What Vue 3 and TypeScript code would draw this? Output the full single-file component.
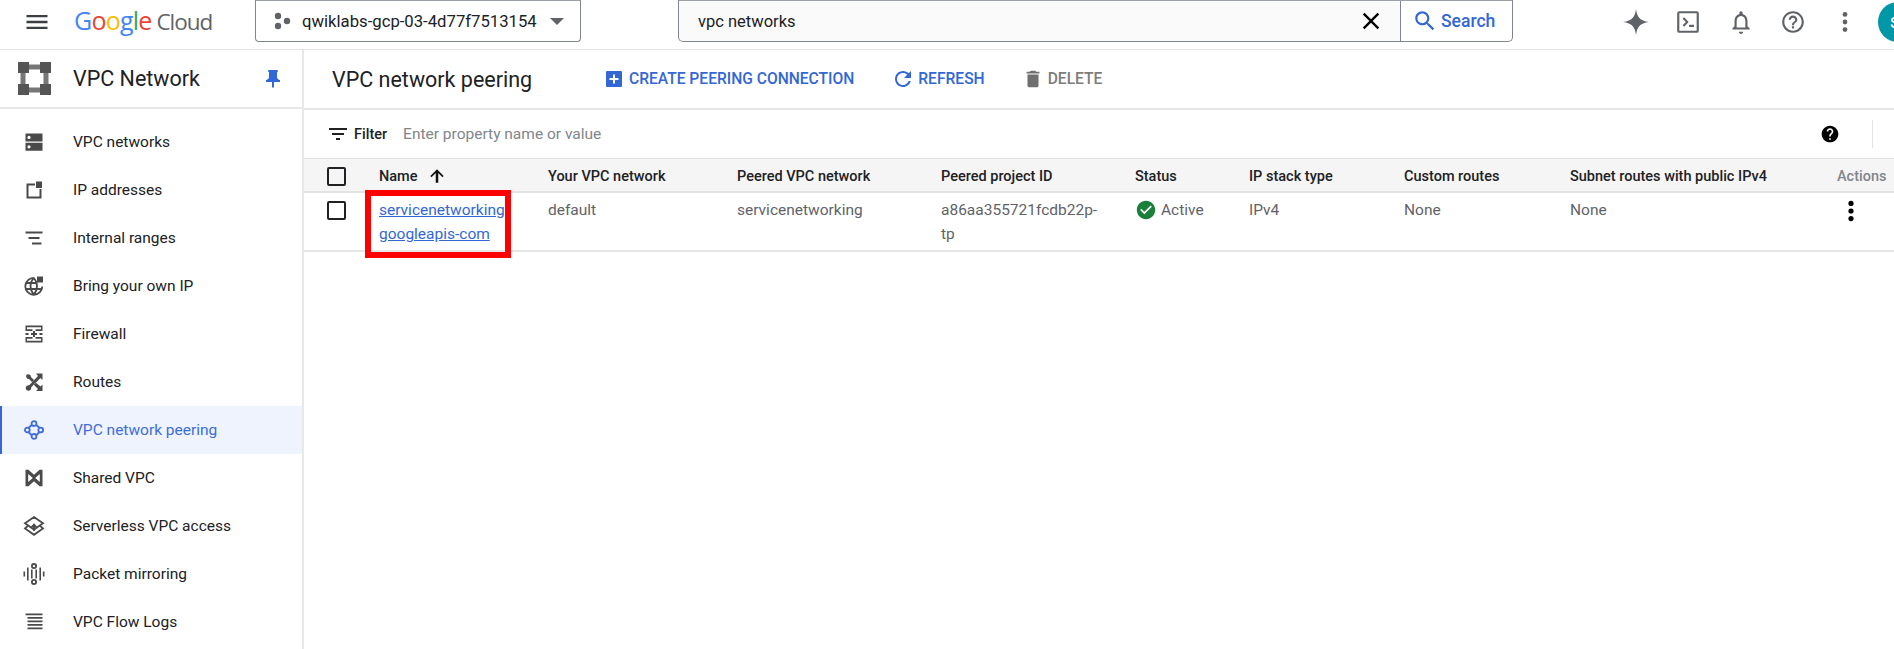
<script setup lang="ts">
interface NavItem { label: string; fill?: string; stroke?: string; active?: boolean }

const nav: NavItem[] = [
  { label: 'VPC networks', fill: 'M0.500 0.500h17v8h-17zM4 2.800a1.600 1.600 0 1 0 0 3.200a1.600 1.600 0 0 0 0-3.200zM0.500 9.800h17v8h-17zM4 12.200a1.600 1.600 0 1 0 0 3.200a1.600 1.600 0 0 0 0-3.200z' },
  { label: 'IP addresses', fill: 'M11 0.500h6v6.500h-6zM1.500 2.500h8.500v2H3.500v11h11V8h2v9.500h-15z' },
  { label: 'Internal ranges', fill: 'M0.500 2.500h17v2h-17zM3.500 8h11v2h-11zM7 13.500h9.500v2H7z' },
  { label: 'Bring your own IP', fill: 'M12 -0.500h6v6h-6z', stroke: 'M17.300 9.500A8.500 8.500 0 1 1 8.800 0.800M0.800 6h10M0.800 12h16M8.800 0.800C4.500 6 4.500 12 8.800 17.700M8.800 0.800C13 6 13 12 8.800 17.700' },
  { label: 'Firewall', fill: 'M0.500 0.500h17v1.800h-17zM0.500 4.300h7v1.800h-7zM10.500 4.300h7v1.800h-7zM0.500 8.100h3v1.800h-3zM6 8.100h6v1.800H6zM14.500 8.100h3v1.800h-3zM0.500 11.900h7v1.800h-7zM10.500 11.900h7v1.800h-7zM0.500 15.700h17v1.800h-17zM0.500 2.300h1.500v2H0.500zM16 2.300h1.500v2H16zM8 6.100h2v2H8zM8 9.900h2v2H8zM0.500 13.700h1.500v2H0.500zM16 13.700h1.500v2H16z' },
  { label: 'Routes', fill: 'M11 0.500h6.500V7l-2-2-9.300 9.300a2.800 2.800 0 1 1-2-2L13 3zM1.500 1.800a2.800 2.800 0 0 1 4.500 2.200L9 7 7 9 4 6A2.800 2.800 0 0 1 1.500 1.800zM10.500 9.500l5 4 2-2v6.500H11l2-2-4.500-4.500z' },
  { label: 'VPC network peering', active: true, stroke: 'M7 3.500 3.500 7M11 3.500 14.500 7M3.500 11 7 14.500M14.500 11 11 14.500M9 0.200a2.400 2.400 0 1 0 0 4.800a2.400 2.400 0 0 0 0-4.800zM2.300 6.600a2.400 2.400 0 1 0 0 4.800a2.400 2.400 0 0 0 0-4.800zM15.700 6.600a2.400 2.400 0 1 0 0 4.800a2.400 2.400 0 0 0 0-4.800zM9 13a2.400 2.400 0 1 0 0 4.800a2.400 2.400 0 0 0 0-4.800z' },
  { label: 'Shared VPC', fill: 'M0.500 0.800h2.900L9 5.700l5.600-4.900h2.900v16.400h-2.900L9 12.300l-5.600 4.900H0.500zM3.200 5v8L7.800 9zM14.800 5 10.200 9l4.600 4z' },
  { label: 'Serverless VPC access', stroke: 'M9 0 18 6.300 9 12.600 0 6.300zM2.800 8.800 0 11.500 9 17.800 18 11.500 15.200 8.800M9 7.500v6.500M6.500 10.300 9 7.500l2.500 2.800' },
  { label: 'Packet mirroring', fill: 'M-1.500 6.500h1.600v5h-1.600zM2 2.500h1.600v13H2zM14.400 2.500H16v13h-1.600zM17.900 6.500h1.600v5h-1.600zM6 4.500h1.600v9H6zM10.400 4.500H12v9h-1.600z', stroke: 'M9 -1a2.100 2.100 0 1 0 0 4.200a2.100 2.100 0 0 0 0-4.200zM9 14.800a2.100 2.100 0 1 0 0 4.200a2.100 2.100 0 0 0 0-4.200z' },
  { label: 'VPC Flow Logs', fill: 'M0.500 0.500h17v1.800h-17zM2.500 4h15v1.800h-15zM2.500 7.500h15v1.800h-15zM2.500 11h15v1.800h-15zM2.500 14.500h15v1.800h-15z' },
]

const columns = [
  'Your VPC network',
  'Peered VPC network',
  'Peered project ID',
  'Status',
  'IP stack type',
  'Custom routes',
  'Subnet routes with public IPv4',
]

const logoLetters = [
  { c: 'G', color: '#4285f4' },
  { c: 'o', color: '#ea4335' },
  { c: 'o', color: '#fbbc04' },
  { c: 'g', color: '#4285f4' },
  { c: 'l', color: '#34a853' },
  { c: 'e', color: '#ea4335' },
]
</script>

<template>
  <div class="page">
    <header class="topbar">
      <svg class="menu" viewBox="0 0 24 24"><path d="M3 18h18v-2H3v2zm0-5h18v-2H3v2zm0-7v2h18V6H3z" /></svg>
      <div class="logo">
        <span v-for="(l, i) in logoLetters" :key="i" :style="{ color: l.color }">{{ l.c }}</span>
        <span class="logo-cloud">Cloud</span>
      </div>
      <div class="project">
        <svg class="project-icon" viewBox="0 0 18 18"><circle cx="5" cy="4" r="3.200" /><circle cx="5" cy="14" r="3.200" /><circle cx="14" cy="9" r="3.200" /></svg>
        <span class="project-name">qwiklabs-gcp-03-4d77f7513154</span>
        <svg class="caret" viewBox="0 0 14 7"><path d="M0 0h14L7 7z" /></svg>
      </div>
      <div class="search">
        <span class="search-query">vpc networks</span>
        <svg class="search-clear" viewBox="0 0 24 24"><path d="M19 6.410L17.590 5 12 10.590 6.410 5 5 6.410 10.590 12 5 17.590 6.410 19 12 13.410 17.590 19 19 17.590 13.410 12z" /></svg>
        <div class="search-btn">
          <svg viewBox="0 0 24 24"><path d="M15.500 14h-.79l-.28-.27C15.410 12.590 16 11.110 16 9.500 16 5.910 13.090 3 9.500 3S3 5.910 3 9.500 5.910 16 9.500 16c1.610 0 3.090-.59 4.230-1.570l.27.28v.79l5 4.990L20.490 19l-4.990-5zm-6 0C7.010 14 5 11.990 5 9.500S7.010 5 9.500 5 14 7.010 14 9.500 11.990 14 9.500 14z" /></svg>
          <span>Search</span>
        </div>
      </div>
      <div class="tools">
        <svg viewBox="0 0 24 24"><path d="M12 0c.9 7.500 3.600 10.800 12 12-8.400 1.200-11.100 4.500-12 12-.9-7.500-3.600-10.800-12-12C8.400 10.800 11.100 7.500 12 0z" /></svg>
        <svg viewBox="0 0 24 24"><path d="M4 2h16a2 2 0 0 1 2 2v16a2 2 0 0 1-2 2H4a2 2 0 0 1-2-2V4a2 2 0 0 1 2-2zm0 2v16h16V4zm3 5 1.400-1.400 4.200 4.400-4.200 4.400L7 15l3-3zm6 5.500h4.500v2H13z" /></svg>
        <svg viewBox="0 0 24 24"><path d="M12 23c1.100 0 2-.9 2-2h-4c0 1.100.9 2 2 2zm6-7v-5c0-3.070-1.630-5.640-4.500-6.320V3.500c0-.83-.67-1.500-1.500-1.500s-1.500.67-1.500 1.500v1.180C7.640 5.360 6 7.920 6 11v5l-2 2v1h16v-1l-2-2zm-2 1H8v-6c0-2.480 1.510-4.500 4-4.500s4 2.020 4 4.500v6z" /></svg>
        <svg viewBox="0 0 24 24"><path d="M11 18h2v-2h-2v2zm1-16C6.480 2 2 6.480 2 12s4.480 10 10 10 10-4.480 10-10S17.520 2 12 2zm0 18c-4.410 0-8-3.590-8-8s3.590-8 8-8 8 3.590 8 8-3.590 8-8 8zm0-14c-2.210 0-4 1.790-4 4h2c0-1.100.9-2 2-2s2 .9 2 2c0 2-3 1.750-3 5h2c0-2.250 3-2.500 3-5 0-2.210-1.790-4-4-4z" /></svg>
        <svg viewBox="0 0 24 24"><circle cx="12" cy="5" r="2.200" /><circle cx="12" cy="12" r="2.200" /><circle cx="12" cy="19" r="2.200" /></svg>
      </div>
      <div class="avatar">s</div>
    </header>

    <div class="body">
      <aside class="sidebar">
        <div class="side-head">
          <svg class="side-logo" viewBox="0 0 33 33">
            <path d="M10 2.500h13v5H10zM10 25.500h13v5H10zM2.500 10h5v13h-5zM25.500 10h5v13h-5z" fill="#777" />
            <path d="M0 0h11v11H0zM22 0h11v11H22zM0 22h11v11H0zM22 22h11v11H22z" />
          </svg>
          <span class="side-title">VPC Network</span>
          <svg class="pin" viewBox="0 0 14 18"><path d="M3 0h8a1 1 0 0 1 0 2v5c0 1.600 1.500 3 3 3v2H8v5l-1 1-1-1v-5H0v-2c1.500 0 3-1.400 3-3V2a1 1 0 0 1 0-2z" /></svg>
        </div>
        <nav class="nav">
          <div v-for="item in nav" :key="item.label" class="nav-item" :class="{ active: item.active }">
            <svg class="nav-icon" viewBox="-2 -2 22 22">
              <path v-if="item.fill" :d="item.fill" class="ico-fill" fill-rule="evenodd" />
              <path v-if="item.stroke" :d="item.stroke" class="ico-stroke" />
            </svg>
            <span>{{ item.label }}</span>
          </div>
        </nav>
      </aside>

      <main class="main">
        <div class="main-head">
          <h1>VPC network peering</h1>
          <div class="action primary create">
            <svg viewBox="0 0 16 16"><path d="M1 0h14a1 1 0 0 1 1 1v14a1 1 0 0 1-1 1H1a1 1 0 0 1-1-1V1a1 1 0 0 1 1-1zm6 3.500V7H3.500v2H7v3.500h2V9h3.500V7H9V3.500z" fill-rule="evenodd" /></svg>
            <span>CREATE PEERING CONNECTION</span>
          </div>
          <div class="action primary refresh">
            <svg viewBox="0 0 24 24"><path d="M17.650 6.350C16.200 4.900 14.210 4 12 4c-4.420 0-7.990 3.580-7.990 8s3.570 8 7.990 8c3.730 0 6.840-2.550 7.730-6h-2.080c-.82 2.330-3.040 4-5.650 4-3.310 0-6-2.690-6-6s2.690-6 6-6c1.660 0 3.140.69 4.220 1.780L13 11h7V4l-2.350 2.350z" /></svg>
            <span>REFRESH</span>
          </div>
          <div class="action muted">
            <svg viewBox="0 0 24 24"><path d="M6 19c0 1.100.9 2 2 2h8c1.100 0 2-.9 2-2V7H6v12zM19 4h-3.500l-1-1h-5l-1 1H5v2h14V4z" /></svg>
            <span>DELETE</span>
          </div>
        </div>

        <div class="filter">
          <svg class="filter-icon" viewBox="0 0 24 24"><path d="M10 18h4v-2h-4v2zM3 6v2h18V6H3zm3 7h12v-2H6v2z" /></svg>
          <span class="filter-label">Filter</span>
          <span class="filter-hint">Enter property name or value</span>
          <svg class="filter-help" viewBox="0 0 24 24"><path d="M12 2C6.480 2 2 6.480 2 12s4.480 10 10 10 10-4.480 10-10S17.520 2 12 2zm1 17h-2v-2h2v2zm2.070-7.750l-.9.92C13.450 12.900 13 13.500 13 15h-2v-.5c0-1.100.45-2.100 1.170-2.830l1.240-1.260c.37-.36.59-.86.59-1.410 0-1.100-.9-2-2-2s-2 .9-2 2H8c0-2.210 1.790-4 4-4s4 1.790 4 4c0 .88-.36 1.680-.93 2.250z" /></svg>
          <span class="filter-div"></span>
        </div>

        <div class="row head">
          <div class="cell check"><span class="box"></span></div>
          <div class="cell name-h">
            <span>Name</span>
            <svg viewBox="0 0 24 24"><path d="M4 12l1.410 1.410L10.500 8.300V20h3V8.300l5.090 5.110L20 12l-8-8-8 8z" /></svg>
          </div>
          <div v-for="c in columns" :key="c" class="cell">{{ c }}</div>
          <div class="cell actions-h">Actions</div>
        </div>

        <div class="row data">
          <div class="cell check"><span class="box"></span></div>
          <div class="cell name-cell">
            <a class="link">servicenetworking</a><br /><a class="link">googleapis-com</a>
            <span class="highlight"></span>
          </div>
          <div class="cell">default</div>
          <div class="cell">servicenetworking</div>
          <div class="cell">a86aa355721fcdb22p-<br />tp</div>
          <div class="cell status">
            <svg viewBox="0 0 24 24"><path d="M12 1C5.900 1 1 5.900 1 12s4.900 11 11 11 11-4.900 11-11S18.100 1 12 1zm-2 16l-5-5 1.410-1.410L10 14.170l7.590-7.590L19 8l-9 9z" /></svg>
            <span>Active</span>
          </div>
          <div class="cell">IPv4</div>
          <div class="cell">None</div>
          <div class="cell">None</div>
          <div class="cell kebab">
            <svg viewBox="0 0 24 24"><circle cx="12" cy="5" r="2.400" /><circle cx="12" cy="12" r="2.400" /><circle cx="12" cy="19" r="2.400" /></svg>
          </div>
        </div>
      </main>
    </div>
  </div>
</template>

<style>
html, body { margin: 0; background: #fff; overflow: hidden; }
</style>

<style scoped>
.page {
  width: 1894px;
  height: 649px;
  overflow: hidden;
  position: relative;
  display: flex;
  flex-direction: column;
  font-family: Roboto, "Liberation Sans", sans-serif;
  color: #202124;
  background: #fff;
}

/* top bar */
.topbar {
  height: 49px;
  border-bottom: 1px solid #e3e3e3;
  display: flex;
  align-items: flex-start;
  flex: none;
}
.menu { width: 28px; height: 28px; margin: 8px 0 0 23px; fill: #3c4043; flex: none; }
.logo {
  margin: 5px 0 0 23px;
  width: 181px;
  font: 400 25px/30px "Open Sans", Roboto, sans-serif;
  letter-spacing: -0.8px;
  white-space: nowrap;
  flex: none;
}
.logo-cloud { margin-left: 5px; color: #5f6368; font-size: 22.500px; letter-spacing: -1px; }
.project {
  width: 326px;
  height: 42px;
  box-sizing: border-box;
  border: 1px solid #80868b;
  border-top-color: #9aa0a6;
  border-radius: 0 0 4px 4px;
  display: flex;
  align-items: center;
  flex: none;
}
.project-icon { width: 18px; height: 18px; margin-left: 17px; fill: #5f6368; flex: none; }
.project-name { margin-left: 11px; font-size: 16.700px; width: 238px; white-space: nowrap; }
.caret { width: 14px; height: 7px; margin-left: 10px; fill: #5f6368; }
.search {
  margin-left: 97px;
  width: 835px;
  height: 42px;
  box-sizing: border-box;
  border: 1px solid #80868b;
  border-top-color: #9aa0a6;
  border-radius: 0 0 5px 5px;
  background: #fafafa;
  display: flex;
  align-items: center;
  flex: none;
}
.search-query { margin-left: 19px; font-size: 16.500px; flex: 1; }
.search-clear { width: 28px; height: 28px; fill: #000; margin-right: 15px; }
.search-btn {
  width: 111px;
  height: 100%;
  border-left: 1px solid #80868b;
  background: #fff;
  border-radius: 0 0 5px 0;
  display: flex;
  align-items: center;
  color: #3367d6;
  font-size: 17.500px;
  font-weight: 500;
}
.search-btn svg { width: 26px; height: 26px; fill: #3367d6; margin: 0 3px 0 11px; flex: none; }
.tools {
  margin-left: 110px;
  display: flex;
  gap: 26.300px;
  padding-top: 9px;
  flex: none;
}
.tools svg { width: 26px; height: 26px; fill: #5f6368; flex: none; }
.avatar {
  position: absolute;
  left: 1878px;
  top: 2px;
  width: 40px;
  height: 40px;
  box-sizing: border-box;
  padding-right: 6px;
  border-radius: 50%;
  background: #0097a7;
  color: #fff;
  font-size: 20px;
  line-height: 38px;
  text-align: center;
}

/* body */
.body { flex: 1; display: flex; min-height: 0; }
.sidebar { width: 302px; flex: none; border-right: 2px solid #e8e8e8; }
.side-head { height: 59px; display: flex; align-items: center; border-bottom: 2px solid #e8e8e8; box-sizing: border-box; }
.side-logo { width: 33px; height: 33px; margin-left: 18px; fill: #555; flex: none; }
.side-title { margin-left: 22px; font-size: 21.500px; flex: 1; white-space: nowrap; }
.pin { width: 14px; height: 18px; margin-right: 22px; fill: #3367d6; flex: none; }
.nav { padding-top: 9px; }
.nav-item {
  height: 48px;
  display: flex;
  align-items: center;
  font-size: 15.500px;
  color: #202124;
}
.nav-icon { width: 22px; height: 22px; margin: 0 28px 0 23px; flex: none; overflow: visible; }
.ico-fill { fill: #4a4a4a; }
.ico-stroke { fill: none; stroke: #4a4a4a; stroke-width: 1.800; }
.nav-item.active {
  background: #eef3fd;
  color: #3f6ddb;
  box-shadow: inset 2px 0 0 #3367d6;
}
.nav-item.active .ico-stroke { stroke: #3f6ddb; }

/* main */
.main { flex: 1; min-width: 0; display: flex; flex-direction: column; }
.main-head {
  height: 60px;
  box-sizing: border-box;
  border-bottom: 2px solid #e6e6e6;
  display: flex;
  align-items: center;
  padding-left: 28px;
  flex: none;
}
h1 { margin: 0; font-size: 21.500px; font-weight: 400; width: 274px; white-space: nowrap; }
.action { display: flex; align-items: center; font-size: 15.600px; font-weight: 500; white-space: nowrap; }
.action.primary { color: #3367d6; fill: #3367d6; }
.action.muted { color: #7c7c7c; fill: #6f6f6f; }
.action svg { flex: none; }
.create svg { width: 16px; height: 16px; margin-right: 7px; }
.create { margin-right: 37px; }
.refresh svg { width: 24px; height: 24px; margin-right: 3px; }
.refresh { margin-right: 41px; }
.muted svg { width: 22px; height: 22px; margin-right: 4px; margin-left: -4px; }

.filter { height: 48px; display: flex; align-items: center; flex: none; }
.filter-icon { width: 24px; height: 24px; margin-left: 22px; flex: none; fill: #202124; }
.filter-label { margin-left: 4px; font-size: 14.500px; font-weight: 500; }
.filter-hint { margin-left: 16px; font-size: 15.500px; color: #80868b; flex: 1; }
.filter-help { width: 20px; height: 20px; fill: #000; flex: none; }
.filter-div { width: 1px; height: 28px; background: #e3e3e3; margin: 0 21px 0 32px; flex: none; }

.row {
  display: grid;
  grid-template-columns: 75px 169px 189px 204px 194px 114px 155px 166px 267px 1fr;
  font-size: 15.500px;
  flex: none;
}
.head {
  height: 35px;
  box-sizing: border-box;
  padding-top: 2px;
  background: #f5f5f5;
  border-top: 1px solid #e3e3e3;
  border-bottom: 2px solid #e3e3e3;
  font-size: 14.500px;
  font-weight: 500;
  align-items: center;
  white-space: nowrap;
}
.data {
  height: 59px;
  box-sizing: border-box;
  border-bottom: 2px solid #e6e6e6;
  padding-top: 5px;
  line-height: 24px;
  color: #5f6368;
  align-items: start;
}
.check { padding-left: 23px; display: flex; }
.box { width: 15px; height: 15px; border: 2px solid #202124; border-radius: 2px; display: block; }
.data .box { margin-top: 3px; }
.name-h { display: flex; align-items: center; }
.name-h svg { width: 20px; height: 20px; margin-left: 9px; fill: #111; }
.actions-h { color: #80868b; }
.name-cell { position: relative; }
.link { color: #3367d6; text-decoration: underline; white-space: nowrap; }
.highlight {
  position: absolute;
  left: -14px;
  top: -8px;
  width: 146px;
  height: 68px;
  box-sizing: border-box;
  border: 6px solid #f00;
  pointer-events: none;
}
.status { display: flex; align-items: flex-start; }
.status svg { width: 20px; height: 20px; fill: #188038; margin: 2px 5px 0 1px; flex: none; }
.kebab svg { width: 26px; height: 26px; fill: #000; margin-left: 1px; }
</style>
